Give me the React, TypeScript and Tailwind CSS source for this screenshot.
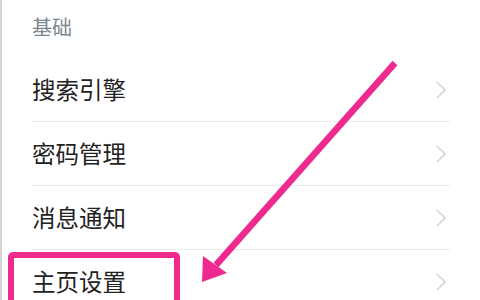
import React from "react";

const items = ["搜索引擎", "密码管理", "消息通知", "主页设置"];

function Chevron() {
  return (
    <svg width="12" height="20" viewBox="0 0 12 20" className="shrink-0">
      <path d="M2 2 L10 10 L2 18" fill="none" stroke="#d4d4d4" strokeWidth="1.6" strokeLinejoin="miter" />
    </svg>
  );
}

export default function App() {
  return (
    <div
      className="relative w-[480px] h-[300px] overflow-hidden bg-white border-l-2 border-[#d6d6d6]"
      style={{ fontFamily: '"Noto Sans CJK SC", "Noto Sans", sans-serif' }}
    >
      <div className="h-[58px] pl-[30px] flex items-center">
        <span className="text-[20px] leading-none text-[#7b8791] -mt-[4px]">基础</span>
      </div>
      <div className="ml-[30px] mr-[30px]">
        {items.map((t) => (
          <div key={t} className="h-[64px] flex items-center justify-between border-b border-[#ececec] pr-[3px]">
            <span className="text-[23.5px] leading-none text-[#222222]">{t}</span>
            <Chevron />
          </div>
        ))}
      </div>
      <div className="absolute left-[6px] top-[252px] w-[172px] h-[60px] border-[6px] border-[#ee2a8f] rounded-[5px]" />
      <svg className="absolute left-0 top-0" width="480" height="300" viewBox="0 0 480 300">
        <line x1="393" y1="63" x2="214" y2="265" stroke="#ee2a8f" strokeWidth="6.5" strokeLinecap="butt" />
        <polygon points="200,282 201,256 225,273" fill="#ee2a8f" />
      </svg>
    </div>
  );
}
